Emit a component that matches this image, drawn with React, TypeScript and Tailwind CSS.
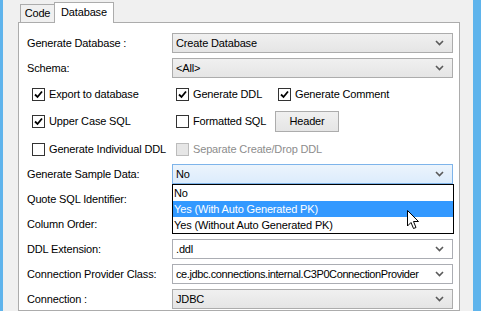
import React from 'react';

function Chevron() {
  return (
    <svg width="9" height="6" viewBox="0 0 9 6" className="shrink-0">
      <polyline points="1,1 4.5,4.5 8,1" fill="none" stroke="#5a5a5a" strokeWidth="1.6" />
    </svg>
  );
}

function Combo({ value, kind = 'gray', tight = false }: { value: string; kind?: 'gray' | 'white' | 'blue'; tight?: boolean }) {
  const look =
    kind === 'white'
      ? 'bg-white border-[#abadb3]'
      : kind === 'blue'
      ? 'bg-gradient-to-b from-[#ecf4fc] to-[#dcecfc] border-[#7eb4ea]'
      : 'bg-gradient-to-b from-[#f0f0f0] to-[#e5e5e5] border-[#acacac]';
  return (
    <div className={`w-[281px] h-[20px] border ${look} flex items-center pl-[3px] pr-[8px]`}>
      <span className={`flex-1 whitespace-nowrap overflow-hidden ${tight ? 'tracking-[-0.4px]' : ''}`}>{value}</span>
      <Chevron />
    </div>
  );
}

function Row({ label, children, className = '' }: { label: string; children: React.ReactNode; className?: string }) {
  return (
    <div className={`flex items-center h-[20px] ${className}`}>
      <div className="w-[145px] whitespace-nowrap">{label}</div>
      {children}
    </div>
  );
}

function Check({ label, checked = false, disabled = false, className = '' }: { label: string; checked?: boolean; disabled?: boolean; className?: string }) {
  return (
    <div className={`flex items-center gap-[4px] ${className}`}>
      <div
        className={`w-[13px] h-[13px] border flex items-center justify-center ${
          disabled ? 'border-[#bcbcbc] bg-[#e6e6e6]' : 'border-[#333333] bg-white'
        }`}
      >
        {checked && (
          <svg width="9" height="9" viewBox="0 0 9 9">
            <polyline points="1,4.5 3.5,7 8,1.5" fill="none" stroke="#000" strokeWidth="1.8" />
          </svg>
        )}
      </div>
      <span className={`whitespace-nowrap ${disabled ? 'text-[#8d8d8d]' : ''}`}>{label}</span>
    </div>
  );
}

export default function App() {
  return (
    <div className="w-[481px] h-[311px] bg-[#f0f0f0] flex overflow-hidden text-[11px] tracking-[-0.15px] text-black font-['Liberation_Sans',Arial,sans-serif] leading-none">
      <div className="w-[3px] bg-[#5fb4ec]" />
      <div className="w-[457px] pl-[15px] pt-[2px] flex flex-col">
        {/* tabs */}
        <div className="flex items-end pl-[2px] h-[21px] relative z-10">
          <div className="h-[18px] w-[35px] border border-b-0 border-[#acacac] bg-[#f0f0f0] flex items-center justify-center mb-px">
            Code
          </div>
          <div className="h-[21px] w-[60px] -ml-px border border-b-0 border-[#acacac] bg-white flex items-center justify-center pb-[2px]">
            Database
          </div>
        </div>
        {/* panel */}
        <div className="flex-1 -mt-px border border-[#acacac] bg-white pl-[8px] pt-[10px]">
          <Row label="Generate Database :">
            <Combo value="Create Database" />
          </Row>
          <Row label="Schema:" className="mt-[5px]">
            <Combo value="<All>" />
          </Row>
          <div className="flex items-center h-[20px] mt-[6px] pl-[5px]">
            <Check label="Export to database" checked className="w-[144px]" />
            <Check label="Generate DDL" checked className="w-[102px]" />
            <Check label="Generate Comment" checked />
          </div>
          <div className="flex items-center h-[21px] mt-[7px] pl-[5px]">
            <Check label="Upper Case SQL" checked className="w-[144px]" />
            <Check label="Formatted SQL" className="w-[99px]" />
            <div className="w-[64px] h-[21px] border border-[#acacac] bg-gradient-to-b from-[#f0f0f0] to-[#e5e5e5] flex items-center justify-center">
              Header
            </div>
          </div>
          <div className="flex items-center h-[20px] mt-[7px] pl-[5px]">
            <Check label="Generate Individual DDL" className="w-[144px]" />
            <Check label="Separate Create/Drop DDL" disabled />
          </div>
          <Row label="Generate Sample Data:" className="mt-[5px] relative z-20">
            <div className="relative">
              <Combo value="No" kind="blue" />
              <div className="absolute left-0 top-[20px] w-[282px] border border-black bg-white">
                <div className="h-[16px] flex items-center pl-[1px]">No</div>
                <div className="h-[16px] flex items-center pl-[1px] bg-[#3399ff] text-white">Yes (With Auto Generated PK)</div>
                <div className="h-[16px] flex items-center pl-[1px]">Yes (Without Auto Generated PK)</div>
                <svg width="13" height="20" viewBox="0 0 13 20" className="absolute left-[234px] top-[25px]">
                  <path
                    d="M0.5,0.5 L0.5,16 L4,12.5 L6.5,18.5 L9,17.5 L6.5,11.5 L11.5,11.5 Z"
                    fill="#fff"
                    stroke="#000"
                    strokeWidth="1"
                  />
                </svg>
              </div>
            </div>
          </Row>
          <Row label="Quote SQL Identifier:" className="mt-[5px]">
            <Combo value="" />
          </Row>
          <Row label="Column Order:" className="mt-[5px]">
            <Combo value="" />
          </Row>
          <Row label="DDL Extension:" className="mt-[5px]">
            <Combo value=".ddl" kind="white" />
          </Row>
          <Row label="Connection Provider Class:" className="mt-[5px]">
            <Combo value="ce.jdbc.connections.internal.C3P0ConnectionProvider" kind="white" tight />
          </Row>
          <Row label="Connection :" className="mt-[5px]">
            <Combo value="JDBC" />
          </Row>
        </div>
      </div>
      <div className="w-[13px]" />
      <div className="w-[8px] bg-[#5fb4ec]" />
    </div>
  );
}
